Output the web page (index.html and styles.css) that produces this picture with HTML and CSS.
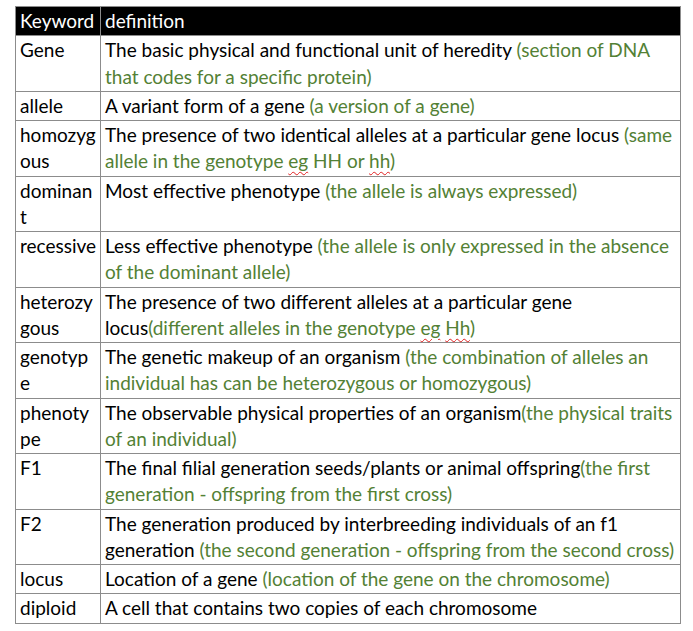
FILE: index.html
```html
<!DOCTYPE html>
<html lang="en">
<head>
<meta charset="utf-8">
<title>Genetics keywords</title>
<link rel="stylesheet" href="styles.css">
</head>
<body>
<div class="page">
<table class="glossary">
  <thead>
    <tr><th class="kw">Keyword</th><th>definition</th></tr>
  </thead>
  <tbody>
    <tr><td class="kw">Gene</td><td>The basic physical and functional unit of heredity <span class="note">(section of DNA that codes for a specific protein)</span></td></tr>
    <tr><td class="kw">allele</td><td>A variant form of a gene <span class="note">(a version of a gene)</span></td></tr>
    <tr><td class="kw">homozyg<br>ous</td><td>The presence of two identical alleles at a particular gene locus <span class="note">(same allele in the genotype <span class="sp">eg</span> HH or <span class="sp">hh</span>)</span></td></tr>
    <tr><td class="kw">dominan<br>t</td><td>Most effective phenotype <span class="note">(the allele is always expressed)</span></td></tr>
    <tr><td class="kw">recessive</td><td>Less effective phenotype <span class="note">(the allele is only expressed in the absence of the dominant allele)</span></td></tr>
    <tr><td class="kw">heterozy<br>gous</td><td>The presence of two different alleles at a particular gene locus<span class="note">(different alleles in the genotype <span class="sp">eg</span> <span class="sp">Hh</span>)</span></td></tr>
    <tr><td class="kw">genotyp<br>e</td><td>The genetic makeup of an organism <span class="note">(the combination of alleles an individual has can be heterozygous or homozygous)</span></td></tr>
    <tr><td class="kw">phenoty<br>pe</td><td>The observable physical properties of an organism<span class="note">(the physical traits of an individual)</span></td></tr>
    <tr><td class="kw">F1</td><td>The final filial generation seeds/plants or animal offspring<span class="note">(the first generation - offspring from the first cross)</span></td></tr>
    <tr><td class="kw">F2</td><td>The generation produced by interbreeding individuals of an f1 generation <span class="note">(the second generation - offspring from the second cross)</span></td></tr>
    <tr><td class="kw">locus</td><td>Location of a gene <span class="note">(location of the gene on the chromosome)</span></td></tr>
    <tr><td class="kw">diploid</td><td>A cell that contains two copies of each chromosome</td></tr>
  </tbody>
</table>
</div>
</body>
</html>
```

FILE: styles.css
```css
html, body {
  margin: 0;
  background: #ffffff;
}

.page {
  padding: 6px 0 0 15px;
}

.glossary {
  border-collapse: collapse;
  width: 666px;
  table-layout: fixed;
  font-family: Lato, "Open Sans", sans-serif;
  font-size: 19px;
  line-height: 26.25px;
  color: #000000;
}

.glossary th,
.glossary td {
  border: 1px solid #8c8c8c;
  padding: 1px 4px 1px 4px;
  text-align: left;
  vertical-align: top;
  font-weight: normal;
}

.glossary th {
  background: #000000;
  color: #ffffff;
}

.glossary .kw {
  width: 76px;
  white-space: nowrap;
}

.note {
  color: #538135;
}

.sp {
  text-decoration: underline wavy #e02020;
  text-decoration-thickness: 1px;
  text-underline-offset: 3px;
}
```
